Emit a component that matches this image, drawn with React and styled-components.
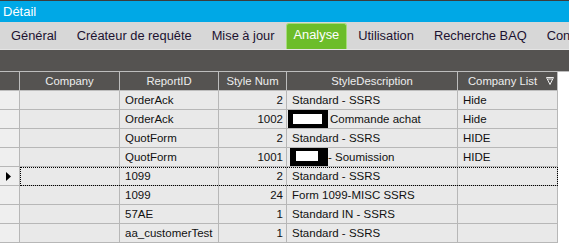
import React from "react";
import styled, { createGlobalStyle } from "styled-components";

const Global = createGlobalStyle`
  html, body { margin: 0; padding: 0; background: #ffffff; }
  body { width: 569px; height: 249px; overflow: hidden; font-family: "Liberation Sans", Arial, sans-serif; }
`;

const Page = styled.div`
  width: 569px;
  height: 249px;
  display: flex;
  flex-direction: column;
  background: #ffffff;
`;

const TopStrip = styled.div`
  height: 1px;
  background: #3c3c3c;
`;

const TitleBar = styled.div`
  height: 21px;
  background: #00a8e6;
  color: #ffffff;
  font-size: 13px;
  line-height: 21px;
  padding-left: 3px;
`;

const TabBar = styled.div`
  height: 27px;
  background: #d7d7d7;
  display: flex;
  align-items: flex-end;
  padding-left: 1px;
  border-bottom: 1px solid #e4e4e4;
  overflow: hidden;
  white-space: nowrap;
`;

const Tab = styled.div`
  box-sizing: border-box;
  height: ${(p) => (p.$active ? "26px" : "27px")};
  padding: 0 ${(p) => (p.$active ? "7px" : "10px")};
  margin: 0 ${(p) => (p.$active ? "1px" : "0")};
  font-size: 12.85px;
  line-height: ${(p) => (p.$active ? "22px" : "27px")};
  color: ${(p) => (p.$active ? "#ffffff" : "#1c1230")};
  background: ${(p) => (p.$active ? "#6cbd2a" : "transparent")};
  border: ${(p) => (p.$active ? "1px solid #a6dc7c" : "none")};
  border-bottom: none;
  border-radius: ${(p) => (p.$active ? "3px 3px 0 0" : "0")};
  flex-shrink: 0;
`;

const DarkBar = styled.div`
  height: 21px;
  background: #555351;
  border-bottom: 1px solid #bdbdbd;
`;

const Grid = styled.div`
  display: flex;
  flex-direction: column;
  width: 558px;
`;

const Row = styled.div`
  display: flex;
  height: 19px;
`;

const Cells = styled.div`
  display: flex;
  position: relative;
  outline: ${(p) => (p.$selected ? "1px dotted #000000" : "none")};
  outline-offset: -1px;
`;

const Cell = styled.div`
  box-sizing: border-box;
  width: ${(p) => p.$w}px;
  height: 19px;
  border-right: 1px solid #b7b7b7;
  border-bottom: 1px solid #b7b7b7;
  background: #e9e9e9;
  color: #111111;
  font-size: 11.5px;
  line-height: 18px;
  padding: 0 ${(p) => (p.$right ? "3px" : "0")} 0 ${(p) => (p.$right ? "0" : "5px")};
  white-space: nowrap;
  overflow: hidden;
  display: flex;
  align-items: center;
  justify-content: ${(p) => (p.$right ? "flex-end" : "flex-start")};
`;

const Selector = styled.div`
  box-sizing: border-box;
  width: 20px;
  height: 19px;
  border-right: 1px solid #b7b7b7;
  border-bottom: 1px solid #b7b7b7;
  background: #efefef;
  display: flex;
  align-items: center;
  padding-left: 6px;
`;

const HeadRow = styled.div`
  display: flex;
  height: 19px;
`;

const HeadCell = styled.div`
  box-sizing: border-box;
  position: relative;
  width: ${(p) => p.$w}px;
  height: 19px;
  border-right: 1px solid #bdbdbd;
  border-bottom: 1px solid #bdbdbd;
  background: #555351;
  color: #eeeeee;
  font-size: 11.3px;
  line-height: 18px;
  text-align: center;
  white-space: nowrap;
  padding-right: ${(p) => (p.$icon ? "10px" : "0")};
`;

const FilterIcon = styled.svg`
  position: absolute;
  right: 3px;
  top: 5px;
`;

const Redact = styled.span`
  box-sizing: border-box;
  display: inline-block;
  width: ${(p) => p.$w}px;
  height: ${(p) => p.$h}px;
  border: 4px solid #000000;
  border-width: ${(p) => p.$bw};
  background: #ffffff;
  margin: ${(p) => p.$m};
  flex-shrink: 0;
`;

const COLS = [100, 99, 68, 171, 100];

const rows = [
  { id: "OrderAck", num: "2", desc: "Standard - SSRS", list: "Hide" },
  { id: "OrderAck", num: "1002", desc: "Commande achat", list: "Hide", redact: "a" },
  { id: "QuotForm", num: "2", desc: "Standard - SSRS", list: "HIDE" },
  { id: "QuotForm", num: "1001", desc: "- Soumission", list: "HIDE", redact: "b" },
  { id: "1099", num: "2", desc: "Standard - SSRS", list: "", selected: true },
  { id: "1099", num: "24", desc: "Form 1099-MISC SSRS", list: "" },
  { id: "57AE", num: "1", desc: "Standard IN - SSRS", list: "" },
  { id: "aa_customerTest", num: "1", desc: "Standard - SSRS", list: "" },
];

const tabs = ["Général", "Créateur de requête", "Mise à jour", "Analyse", "Utilisation", "Recherche BAQ", "Configuration"];

export default function App() {
  return (
    <Page>
      <Global />
      <TopStrip />
      <TitleBar>Détail</TitleBar>
      <TabBar>
        {tabs.map((t) => (
          <Tab key={t} $active={t === "Analyse"}>{t}</Tab>
        ))}
      </TabBar>
      <DarkBar />
      <Grid>
        <HeadRow>
          <HeadCell $w={20} />
          <HeadCell $w={COLS[0]}>Company</HeadCell>
          <HeadCell $w={COLS[1]}>ReportID</HeadCell>
          <HeadCell $w={COLS[2]}>Style Num</HeadCell>
          <HeadCell $w={COLS[3]}>StyleDescription</HeadCell>
          <HeadCell $w={COLS[4]} $icon>
            Company List
            <FilterIcon width="8" height="8" viewBox="0 0 8 8">
              <path d="M0.5 0.5 H7.5 L4 7.5 Z" fill="none" stroke="#eeeeee" strokeWidth="1" />
              <path d="M2 2 H6" stroke="#eeeeee" strokeWidth="1" />
            </FilterIcon>
          </HeadCell>
        </HeadRow>
        {rows.map((r, i) => (
          <Row key={i}>
            <Selector>
              {r.selected && (
                <svg width="5" height="9" viewBox="0 0 5 9">
                  <path d="M0 0 L5 4.5 L0 9 Z" fill="#000000" />
                </svg>
              )}
            </Selector>
            <Cells $selected={r.selected}>
              <Cell $w={COLS[0]} />
              <Cell $w={COLS[1]}>{r.id}</Cell>
              <Cell $w={COLS[2]} $right>{r.num}</Cell>
              <Cell $w={COLS[3]} style={r.redact ? { paddingLeft: r.redact === "a" ? 1 : 3 } : undefined}>
                {r.redact === "a" && <Redact $w={40} $h={18} $bw="4px 6px 4px 5px" $m="0 2px 0 0" />}
                {r.redact === "b" && <Redact $w={38} $h={18} $bw="3px 10px 5px 6px" $m="0" />}
                {r.desc}
              </Cell>
              <Cell $w={COLS[4]}>{r.list}</Cell>
            </Cells>
          </Row>
        ))}
      </Grid>
    </Page>
  );
}
